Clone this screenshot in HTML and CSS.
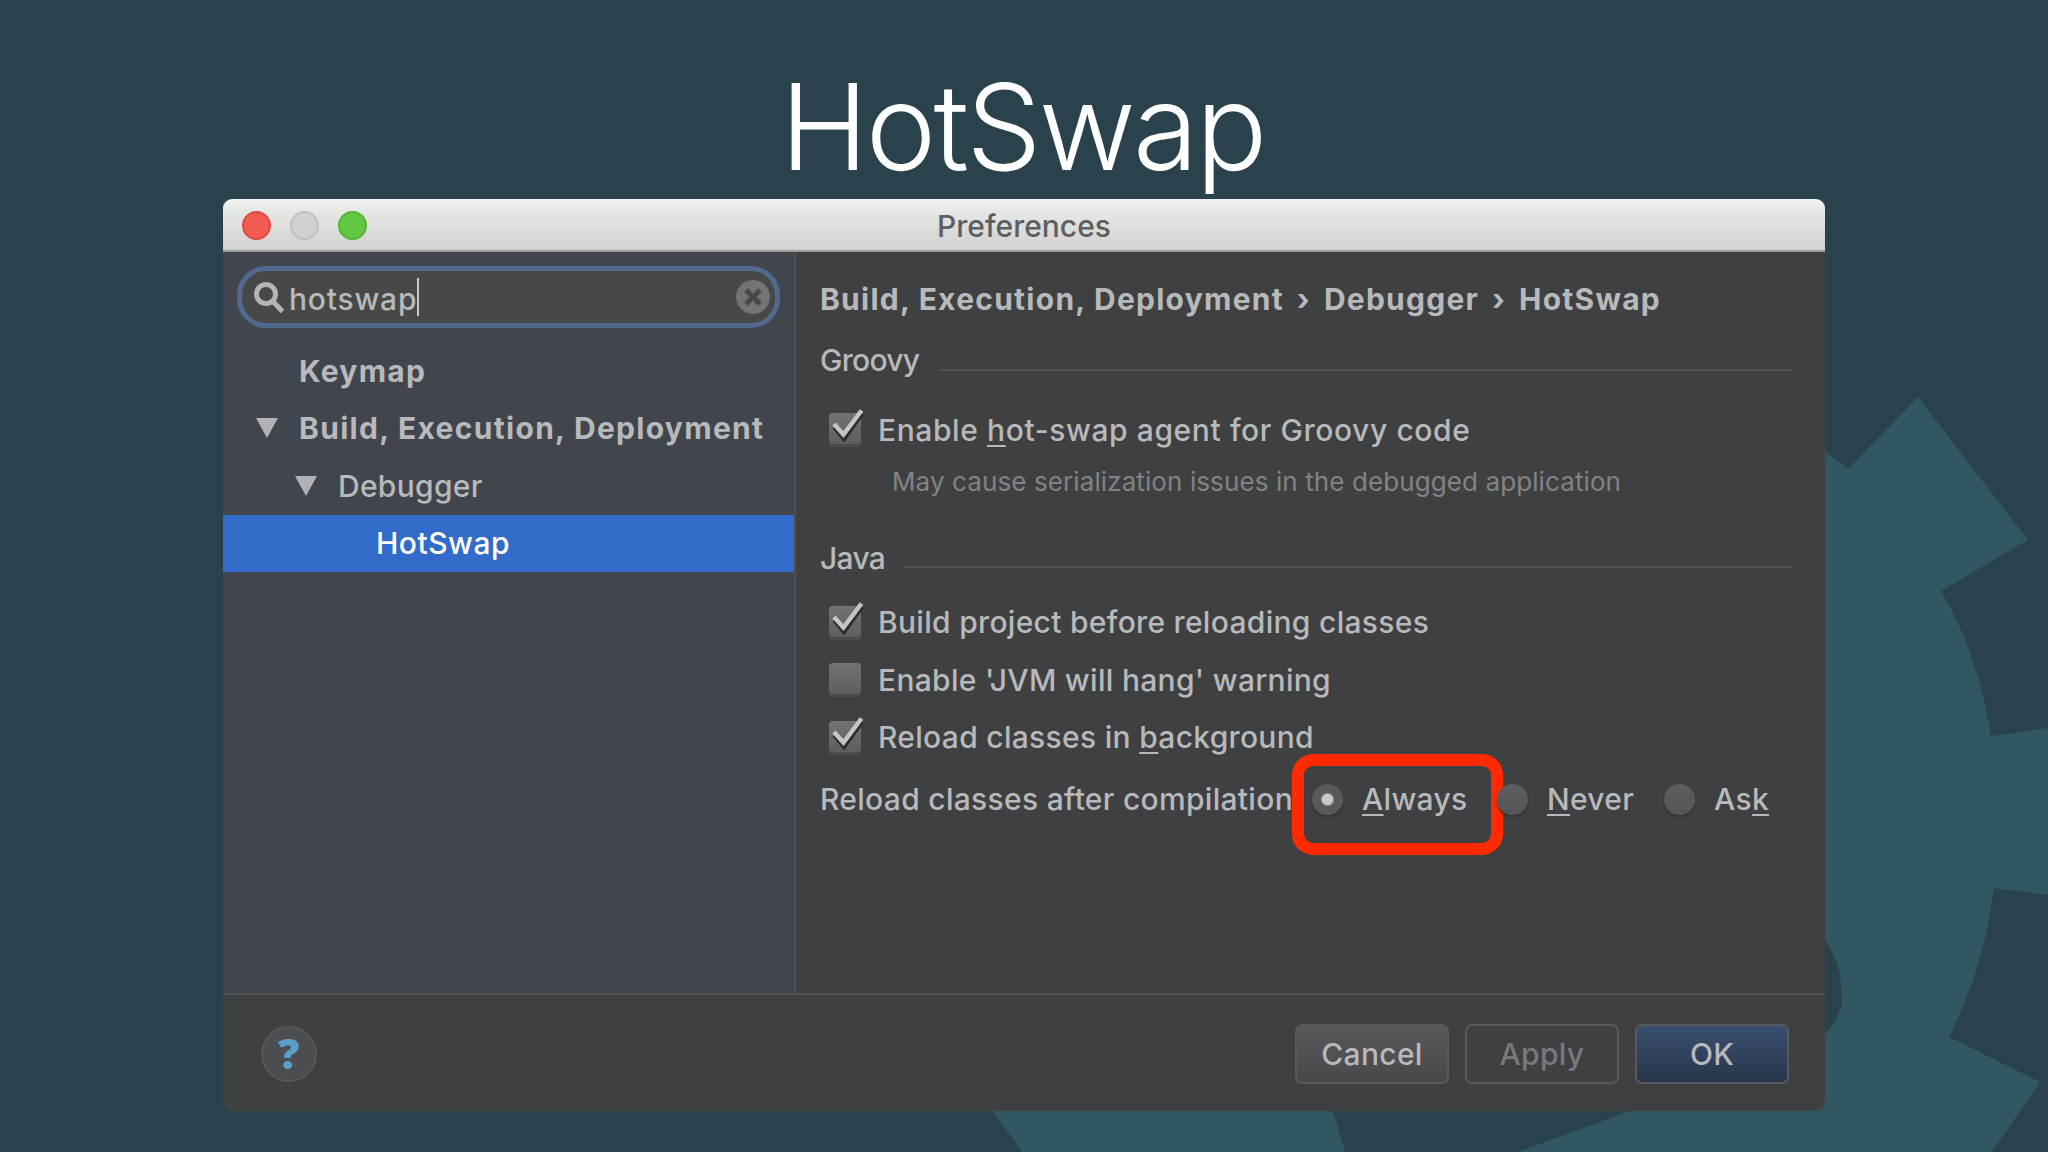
FILE: index.html
```
<!DOCTYPE html>
<html>
<head>
  <meta charset="UTF-8">
  <title>HotSwap</title>
  <link rel="stylesheet" href="styles.css">
</head>
<body>
  <svg class="gear" viewBox="0 0 2048 1152">
    <path d="M1700 400 L1825 451 L1848 469 L1918 397 L2028 540 L1941 591 Q1977 650 1991 736 L2048 728 V895 L1994 888 Q1984 968 1949 1037 L2040 1082 L1992 1152 H1518 L1632 1110 H1700Z"/>
    <path d="M980 1100 H1330 L1345 1152 H1022 L992 1110Z"/>
    <path class="hole" d="M1800 910 L1825 940 Q1842 965 1841 990 L1842 1005 L1835 1022 L1825 1033 L1800 1050Z"/>
  </svg>

  <h1 class="slide-title">HotSwap</h1>

  <div class="window">
    <div class="titlebar">
      <div class="lights">
        <span class="light red"></span>
        <span class="light grey"></span>
        <span class="light green"></span>
      </div>
      <span class="window-title">Preferences</span>
    </div>

    <div class="content">
      <div class="sidebar">
        <div class="search">
          <svg class="magnifier" viewBox="0 0 32 32"><circle cx="13" cy="12" r="9.5"/><path d="M19.5 19 L29.500 29.500"/></svg>
          <span class="query">hotswap</span>
          <span class="caret"></span>
          <svg class="clear" viewBox="0 0 34 34"><circle cx="17" cy="17" r="17"/><path d="M10 10 L24 24 M24 10 L10 24"/></svg>
        </div>
        <div class="tree">
          <div class="node level1"><span class="arrow"></span><b>Keymap</b></div>
          <div class="node level1"><svg class="arrow" viewBox="0 0 22 20"><path d="M0 0H22L11 20Z"/></svg><b>Build, Execution, Deployment</b></div>
          <div class="node level2"><svg class="arrow" viewBox="0 0 22 20"><path d="M0 0H22L11 20Z"/></svg><span>Debugger</span></div>
          <div class="node level3 selected"><span>HotSwap</span></div>
        </div>
      </div>

      <div class="panel">
        <div class="breadcrumb">
          <span>Build, Execution, Deployment</span>
          <span class="sep">›</span>
          <span>Debugger</span>
          <span class="sep">›</span>
          <span>HotSwap</span>
        </div>

        <div class="section"><span>Groovy</span><i></i></div>
        <div class="check">
          <svg class="box" viewBox="0 0 36 38"><use href="#box"/><use href="#tick"/></svg>
          <span class="agent">Enable <u>h</u>ot-swap agent for Groovy code</span>
        </div>
        <div class="hint">May cause serialization issues in the debugged application</div>

        <div class="section java"><span>Java</span><i></i></div>
        <div class="check">
          <svg class="box" viewBox="0 0 36 38"><use href="#box"/><use href="#tick"/></svg>
          <span>Build project before reloading classes</span>
        </div>
        <div class="check">
          <svg class="box" viewBox="0 0 36 38"><use href="#box"/></svg>
          <span>Enable 'JVM will hang' warning</span>
        </div>
        <div class="check">
          <svg class="box" viewBox="0 0 36 38"><use href="#box"/><use href="#tick"/></svg>
          <span>Reload classes in <u>b</u>ackground</span>
        </div>

        <div class="radios">
          <span class="radios-label">Reload classes after compilation</span>
          <div class="option always"><span class="radio on"></span><span><u>A</u>lways</span><div class="highlight"></div></div>
          <div class="option never"><span class="radio"></span><span><u>N</u>ever</span></div>
          <div class="option"><span class="radio"></span><span>As<u>k</u></span></div>
        </div>
      </div>
    </div>

    <div class="footer">
      <div class="help">?</div>
      <div class="buttons">
        <div class="button cancel">Cancel</div>
        <div class="button apply">Apply</div>
        <div class="button ok">OK</div>
      </div>
    </div>
  </div>

  <!-- shapes shared by the checkboxes -->
  <svg class="defs">
    <defs>
      <linearGradient id="boxfill" x1="0" y1="0" x2="0" y2="1">
        <stop offset="0" stop-color="#727375"/>
        <stop offset="1" stop-color="#5d5e60"/>
      </linearGradient>
      <g id="box">
        <rect x="1" y="5" width="32" height="32" rx="4" fill="#353638"/>
        <rect x="1" y="8" width="32" height="30" rx="4" fill="#4b4c4e"/>
        <rect x="1" y="4" width="32" height="31" rx="4" fill="url(#boxfill)"/>
      </g>
      <g id="tick" fill="none">
        <path d="M6.500 18 L16 29.500 L33.500 5" stroke="#2c2d2f" stroke-width="5"/>
        <path d="M6 15 L15.500 25.500 L33.500 1.500" stroke="#c4c5c6" stroke-width="4.500"/>
      </g>
    </defs>
  </svg>
</body>
</html>
```
FILE: styles.css
```
body{
  margin: 0;
  width: 2048px;
  height: 1152px;
  overflow: hidden;
  background-color: #29424b;
  font-family: Inter, "Liberation Sans", sans-serif;
  font-size: 30px;
  font-weight: 500;
  letter-spacing: 0.3px;
  color: #b8b9ba;
  display: flex;
  flex-direction: column;
  align-items: center;
}
.gear{
  position: absolute;
  top: 0;
  left: 0;
  width: 2048px;
  height: 1152px;
  fill: #315763;
}
.gear .hole{
  fill: #29424b;
}
.defs{
  position: absolute;
  width: 0;
  height: 0;
}
.slide-title{
  margin: 0;
  padding-right: 3px;
  height: 199px;
  line-height: 254px;
  font-size: 119px;
  font-weight: 300;
  letter-spacing: -2.7px;
  color: #fff;
  white-space: nowrap;
}
.window{
  position: relative;
  width: 1602px;
  height: 912px;
  border-radius: 9px;
  overflow: hidden;
  background-color: #3f4042;
  display: flex;
  flex-direction: column;
}
.window span, .window b{
  white-space: nowrap;
}

/* title bar */
.titlebar{
  display: grid;
  grid-template-columns: 1fr auto 1fr;
  align-items: center;
  height: 53px;
  box-sizing: border-box;
  border-bottom: 2px solid #9c9c9e;
  background: linear-gradient(#f0f2f0, #e4e6e3 30%, #d2d2d1);
}
.lights{
  display: flex;
  gap: 19px;
  padding: 2px 0 0 19px;
}
.light{
  width: 29px;
  height: 29px;
  box-sizing: border-box;
  border-radius: 50%;
}
.red{
  background-color: #f25a52;
  border: 2px solid #e04a45;
}
.grey{
  background-color: #d0d2cf;
  border: 2px solid #c0c2bf;
}
.green{
  background-color: #62c843;
  border: 2px solid #55b532;
}
.window-title{
  padding-top: 3px;
  color: #5d5e62;
  font-weight: 450;
  letter-spacing: 0;
}

.content{
  display: flex;
  height: 741px;
}

/* sidebar */
.sidebar{
  width: 571px;
  border-right: 2px solid #4d4f52;
  background-color: #41454e;
}
.search{
  display: flex;
  align-items: center;
  box-sizing: border-box;
  width: 543px;
  height: 62px;
  margin: 14px 0 14px 14px;
  padding: 0 5px 0 11px;
  border: 5px solid #52688f;
  border-radius: 29px;
  background-color: #464948;
}
.magnifier{
  width: 32px;
  height: 32px;
  margin: 2px 4px 0 0;
  fill: none;
  stroke: #b4b5b6;
  stroke-width: 5;
}
.query{
  padding-top: 3px;
  letter-spacing: 0.8px;
}
.caret{
  width: 2px;
  height: 38px;
  background-color: #c8c9ca;
}
.clear{
  width: 34px;
  height: 34px;
  margin-left: auto;
  fill: #707475;
  stroke: #464948;
  stroke-width: 5;
}
.clear circle{
  stroke: none;
}
.node{
  display: flex;
  align-items: center;
  height: 57.5px;
}
.node b{
  letter-spacing: 1.3px;
}
.level1{
  padding-left: 33px;
}
.level2{
  padding-left: 72px;
}
.level3{
  padding-left: 153px;
}
.arrow{
  width: 22px;
  height: 20px;
  margin-right: 21px;
  fill: #b0b2b4;
}
.selected{
  background-color: #326bc9;
  color: #fff;
  letter-spacing: 0.5px;
}

/* settings panel */
.panel{
  flex: 1;
  padding: 27px 33px 0 24px;
}
.breadcrumb{
  display: flex;
  height: 40px;
  line-height: 40px;
  font-weight: 700;
  letter-spacing: 1.25px;
}
.sep{
  width: 40px;
  text-align: center;
}
.section{
  display: flex;
  align-items: center;
  gap: 20px;
  height: 40px;
  margin: 21px 0 21px;
  letter-spacing: -0.7px;
}
.section i{
  flex: 1;
  height: 2px;
  margin-top: 19px;
  background-color: #525356;
}
.java{
  margin: 36px 0 16px;
}
.check{
  display: flex;
  align-items: center;
  height: 57.5px;
}
.box{
  width: 36px;
  height: 38px;
  margin: 0 14px 3px 8px;
}
.agent{
  letter-spacing: 0.6px;
}
u{
  text-decoration-thickness: 2px;
  text-underline-offset: 4px;
  text-decoration-skip-ink: none;
}
.hint{
  height: 40px;
  line-height: 40px;
  margin-top: 3px;
  padding-left: 72px;
  font-size: 26px;
  font-weight: 400;
  letter-spacing: 0.1px;
  color: #828384;
  white-space: nowrap;
}
.radios{
  display: flex;
  align-items: center;
  height: 66px;
}
.radios-label{
  width: 492px;
}
.option{
  position: relative;
  display: flex;
  align-items: center;
  gap: 19px;
}
.always{
  width: 185px;
}
.never{
  width: 167px;
}
.radio{
  width: 31px;
  height: 31px;
  border-radius: 50%;
  background: linear-gradient(#5c5d60, #55565a);
  box-shadow: 0 2px 2px #313234;
}
.on{
  background: radial-gradient(circle, #c8c9ca 5px, #58595c 7px);
}
/* marker drawn over the chosen option */
.highlight{
  position: absolute;
  left: -20px;
  top: -27px;
  width: 187px;
  height: 77px;
  border: 12.5px solid #ff2a00;
  border-radius: 21px;
}

/* footer */
.footer{
  display: flex;
  justify-content: space-between;
  align-items: flex-start;
  flex: 1;
  border-top: 2px solid #505154;
  padding: 29px 36px 0 38px;
}
.help{
  width: 52px;
  height: 52px;
  margin-top: 2px;
  border: 2px solid #55575a;
  border-radius: 50%;
  background-color: #4c4d50;
  color: #5a9fcb;
  font-family: "Open Sans", sans-serif;
  font-size: 42px;
  font-weight: 800;
  line-height: 50px;
  text-align: center;
}
.buttons{
  display: flex;
  gap: 16px;
}
.button{
  width: 150px;
  height: 56px;
  border: 2px solid #58595c;
  border-radius: 7px;
  line-height: 57px;
  text-align: center;
  background: linear-gradient(#56585a, #47494c);
}
.apply{
  background: none;
  color: #78797b;
}
.ok{
  background: linear-gradient(#3a4f70, #28364b);
}
```
